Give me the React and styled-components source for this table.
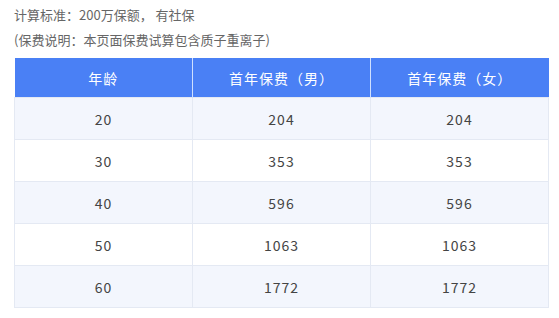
import React from 'react';
import styled, { createGlobalStyle } from 'styled-components';

const rows = [
    { age: 20, male: 204, female: 204 },
    { age: 30, male: 353, female: 353 },
    { age: 40, male: 596, female: 596 },
    { age: 50, male: 1063, female: 1063 },
    { age: 60, male: 1772, female: 1772 },
];

const App = () => {
    return (
        <Page>
            <GlobalStyle />
            <Note>计算标准：200万保额， 有社保</Note>
            <Note>(保费说明：本页面保费试算包含质子重离子)</Note>
            <Table>
                <thead>
                    <tr>
                        <Th>年龄</Th>
                        <Th>首年保费（男）</Th>
                        <Th>首年保费（女）</Th>
                    </tr>
                </thead>
                <tbody>
                    {rows.map((r, i) => (
                        <Row key={r.age} $striped={i % 2 === 0}>
                            <Td>{r.age}</Td>
                            <Td>{r.male}</Td>
                            <Td>{r.female}</Td>
                        </Row>
                    ))}
                </tbody>
            </Table>
        </Page>
    );
};

const GlobalStyle = createGlobalStyle`
    body {
        margin: 0;
        background: #fff;
        font-family: "Noto Sans CJK SC", "Noto Sans", sans-serif;
        text-spacing-trim: space-all;
        font-feature-settings: "chws" 0, "halt" 0, "palt" 0;
    }
`;

const Page = styled.div`
    width: 559px;
    height: 318px;
    padding: 2px 10px 0 14px;
    box-sizing: border-box;
`;

const Note = styled.div`
    font-size: 13px;
    line-height: 25px;
    color: #666;
`;

const Table = styled.table`
    margin-top: 6px;
    width: 535px;
    border-collapse: collapse;
    table-layout: fixed;
`;

const Th = styled.th`
    height: 39px;
    padding: 0;
    background: #4a80f5;
    color: #fff;
    font-weight: normal;
    font-size: 14px;
    letter-spacing: 1px;
    text-align: center;
    border-left: 1px solid #cfe0ff;
    &:first-child {
        border-left: none;
    }
`;

const Row = styled.tr`
    background: ${(p) => (p.$striped ? '#f3f6fd' : '#fff')};
`;

const Td = styled.td`
    height: 41px;
    padding: 0;
    font-size: 14px;
    color: #444;
    letter-spacing: 1px;
    text-align: center;
    border: 1px solid #e4e9f3;
`;

export default App;
